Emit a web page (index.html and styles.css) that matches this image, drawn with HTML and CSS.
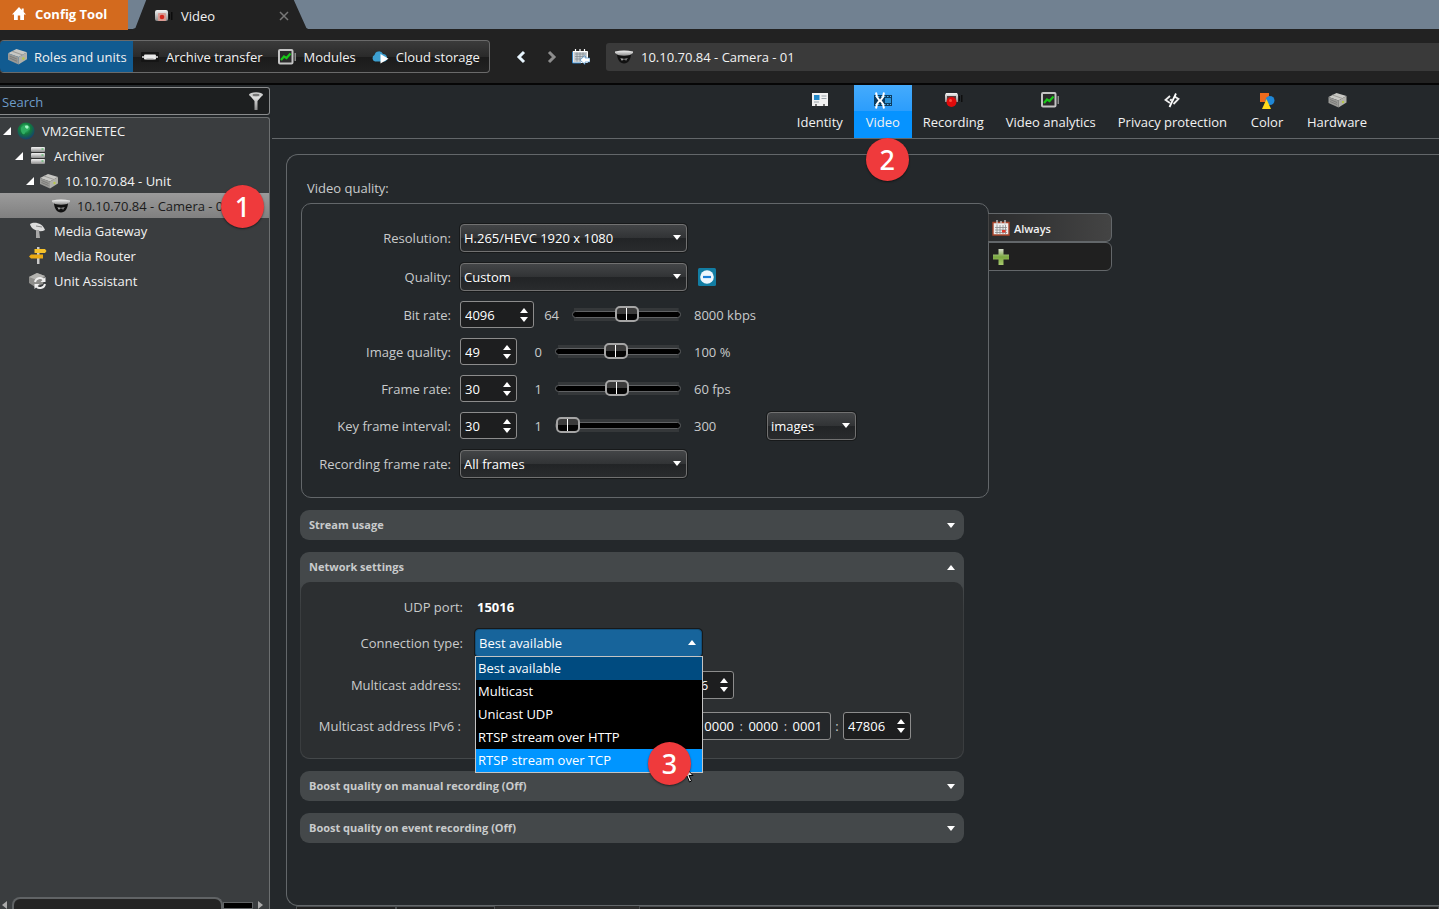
FILE: index.html
```html
<!DOCTYPE html>
<html lang="en">
<head>
<meta charset="utf-8">
<title>Config Tool - Video</title>
<meta name="viewport" content="width=device-width, initial-scale=1">
<link rel="stylesheet" href="styles.css">
</head>
<body>
<svg class="sprite" aria-hidden="true">
  <defs>
    <linearGradient id="g-steel" x1="0" y1="0" x2="0" y2="1"><stop offset="0" stop-color="#f4f4f4"/><stop offset="1" stop-color="#8c8c8c"/></linearGradient>
    <radialGradient id="g-globe" cx=".45" cy=".35" r=".65"><stop offset="0" stop-color="#3fd07a"/><stop offset=".5" stop-color="#137a3c"/><stop offset="1" stop-color="#163f6e"/></radialGradient>
    <linearGradient id="g-plus" x1="0" y1="0" x2="0" y2="1"><stop offset="0" stop-color="#d5dccb"/><stop offset=".5" stop-color="#7aa840"/><stop offset="1" stop-color="#a9c96f"/></linearGradient>
  </defs>
  <symbol id="i-home" viewBox="0 0 16 16"><path d="M8 1 1 8.400h2V14h3.800V9.500h2.400V14H13V8.400h2L12.700 6V2.500h-2V4z" fill="#fff"/></symbol>
  <symbol id="i-cube" viewBox="0 0 18 16"><path d="M0 5 8 1l10 3-8 4.500z" fill="#c8c8c4"/><path d="M0 5 10 8.500V15.500L0 11z" fill="#999996"/><path d="M10 8.500 18 4v6.500l-8 5z" fill="#b0b0aa"/><path d="M4 3 14 6.500" stroke="#9c9c98" fill="none"/><path d="m1.500 7.500 7 3M1.500 9.500l7 3" stroke="#7d7d7a" fill="none"/><circle cx="14.500" cy="10" r="1.200" fill="#b7c84a"/></symbol>
  <symbol id="i-cam" viewBox="0 0 18 14"><rect x="0" y="1" width="13" height="11" rx="2" fill="url(#g-steel)"/><rect x="3" y="4" width="8" height="8" rx="1" fill="#d99a92"/><circle cx="7" cy="8" r="2.300" fill="#d3281d"/><path d="M14 5h1v5h-1zM16 3h1.500v8H16z" fill="#0c0c0c"/></symbol>
  <symbol id="i-transfer" viewBox="0 0 18 12"><rect x="0" y="1" width="18" height="10" rx="1" fill="#151515"/><rect x="3" y="3.500" width="12" height="5" rx="1" fill="#e9e9e9"/><path d="M1 6h3M14 6h3" stroke="#ddd" stroke-width="1.500"/><path d="M5.500 8h7" stroke="#999"/></symbol>
  <symbol id="i-chart" viewBox="0 0 19 16"><rect x="1" y="1" width="13.500" height="13.500" rx="1" fill="#2b2b2b" stroke="#c4c4c4" stroke-width="2"/><path d="m3 11 3-3.500L8.500 9l4-4.500" stroke="#19c819" stroke-width="2.200" fill="none"/><path d="M16.500 4h1.500v8h-1.500z" fill="#8b8b8b"/></symbol>
  <symbol id="i-cloud" viewBox="0 0 18 14"><path d="M4 11.500A3.500 3.500 0 0 1 3.500 5 4.500 4.500 0 0 1 12 4a4 4 0 0 1 2 7.500z" fill="#3d9fd0"/><path d="M9.500 4v9.500l8-4.700z" fill="#fff"/></symbol>
  <symbol id="i-back" viewBox="0 0 10 14"><path d="M8 2 3 7l5 5" stroke="#e8f6ff" stroke-width="3" fill="none"/></symbol>
  <symbol id="i-forward" viewBox="0 0 10 14"><path d="m2 2 5 5-5 5" stroke="#8d8d8d" stroke-width="3" fill="none"/></symbol>
  <symbol id="i-goto" viewBox="0 0 18 16"><path d="M1 2.500h14.500v11H1z" fill="#c9ced2" stroke="#fff"/><path d="M3 5h11M3 7.500h11M3 10h11M5 3.500v9M8 3.500v9M11 3.500v9" stroke="#7d878f" stroke-width=".7"/><path d="M3.500 0v3M8 0v3M12.500 0v3" stroke="#fff" stroke-width="1.200"/><path d="M.5 3v11H9" stroke="#2f80c4" fill="none"/><path d="m8 11 5-4.500v2.500h5v4h-5V15.500z" fill="#fff" stroke="#2f80c4" stroke-width=".6"/></symbol>
  <symbol id="i-dome" viewBox="0 0 18 14"><path d="M2 3.500h14c0 6-3 10-7 10s-7-4-7-10z" fill="#111"/><path d="M0 1.500Q9-.5 18 1.500V3l-3 2Q9 6.500 3 5L0 3z" fill="url(#g-steel)"/><path d="M5.500 8.500c2 1 5 1 7 0" stroke="#777" fill="none"/><circle cx="7" cy="9.500" r="1" fill="#aaa"/><circle cx="11" cy="9.500" r="1" fill="#777"/></symbol>
  <symbol id="i-filter" viewBox="0 0 14 18"><path d="M0 2.500 5.500 9v9h3V9L14 2.500z" fill="url(#g-steel)"/><ellipse cx="7" cy="2.800" rx="6.800" ry="2.500" fill="#cfcfcf"/><ellipse cx="7" cy="3" rx="3.500" ry="1.200" fill="#777"/></symbol>
  <symbol id="i-globe" viewBox="0 0 18 18"><circle cx="9" cy="9" r="8.500" fill="url(#g-globe)"/><path d="M6 4c2-2 7-1 7 2s-4 2-5 5-4 0-4-3 .5-3 2-4z" fill="#2fae62"/><path d="M8 4c1.500-1 4-.5 3.500 1.500S8 7 8 4z" fill="#a4f5c4"/></symbol>
  <symbol id="i-server" viewBox="0 0 16 18"><g fill="url(#g-steel)"><rect x="1" y="0" width="14" height="5" rx="1"/><rect x="1" y="6" width="14" height="5" rx="1"/><rect x="1" y="12" width="14" height="5" rx="1"/></g><path d="M1 5.500h14M1 11.500h14" stroke="#333"/><path d="M11.500 2h2m-2 6h2m-2 6h2" stroke="#37b34a"/></symbol>
  <symbol id="i-dish" viewBox="0 0 18 18"><path d="M1 2C5-1 14 1 16 8c-5 3-14 0-15-6z" fill="#dcdcdc"/><path d="m7 4 6 1" stroke="#888"/><path d="M7 8h3l1 8H7z" fill="#a8a8a8"/></symbol>
  <symbol id="i-sign" viewBox="0 0 18 18"><path d="M8 0h2.500v17H8z" fill="#c9c9c9"/><path d="M5.500 2H16l1.500 2L16 6H5.500z" fill="#f6c22b"/><path d="M2 7.500h12v4H2L0 9.500z" fill="#eaa914"/></symbol>
  <symbol id="i-assist" viewBox="0 0 18 18"><path d="m0 5 8-4 8 3-2 8-8 3-6-4z" fill="#8d8d8a"/><path d="m0 5 8-4 8 3-8 4z" fill="#b3b3b0"/><path d="M6 10a5 5 0 0 1 8.500-2.500M16 12a5 5 0 0 1-8.500 2.500" stroke="#efefef" stroke-width="2" fill="none"/><path d="M16.500 5v5h-5zM5.500 17v-5h5z" fill="#efefef"/></symbol>
  <symbol id="i-identity" viewBox="0 0 18 16"><path d="M1 1h16v13h-3l-1-1-1 1H6l-1-1-1 1H1z" fill="#f1f1f1"/><path d="M3 3h5.500v5H3z" fill="#2388c8"/><path d="M10.500 4h5M10.500 6.500h5M3 10h5" stroke="#9aa4aa"/><path d="M4 12h2v2H4zM12 12h2v2h-2z" fill="#777"/></symbol>
  <symbol id="i-video" viewBox="0 0 20 17"><path d="M1 3h18v11H1z" fill="#0d3c60"/><path d="M2 4.500h16M2 12.500h16" stroke="#52b6f2" stroke-dasharray="1.500 1.500"/><path d="M12 6h6v5h-6z" fill="#2b93d8"/><path d="M3 .5 4 5l2.500 3.500L4 12l-1 4.500M11 .5 10 5 7.500 8.500 10 12l1 4.500M6 8.500h2" stroke="#fff" stroke-width="2" fill="none"/></symbol>
  <symbol id="i-record" viewBox="0 0 19 16"><path d="M2 1h11l1 2v7H1V3z" fill="url(#g-steel)"/><path d="M3 4h9v5H3z" fill="#5a3a3a"/><path d="M15 4h1v5h-1zM17 3h1.500v7H17z" fill="#0e0e0e"/><circle cx="7.500" cy="10" r="5" fill="#e00b0b"/><circle cx="6.500" cy="8.500" r="1.500" fill="#ff4a3c"/></symbol>
  <symbol id="i-privacy" viewBox="0 0 16 16"><path d="M6 4 1.500 8 6 11M10.500 4.500 14.500 7l-5 5" stroke="#eee" stroke-width="1.800" fill="none"/><path d="M12 1.500 5.500 15" stroke="#fff" stroke-width="1.800"/><circle cx="7" cy="8" r="1.300" fill="#ddd"/></symbol>
  <symbol id="i-color" viewBox="0 0 16 18"><path d="M1 1h9v9H1z" fill="#ee6a1c"/><circle cx="11" cy="8.500" r="4.500" fill="#1f87d6"/><path d="m7.500 7 4.500 10H3z" fill="#ffd91c"/></symbol>
  <symbol id="i-calendar" viewBox="0 0 18 16"><path d="M1 2.500h16V15H1z" fill="#eee" stroke="#a9452b" stroke-width="1.400"/><path d="M3 7.500h12M3 10h12M3 12.500h12M5 5v9M8 5v9M11 5v9M13.500 5v9" stroke="#888" stroke-width=".8"/><path d="M5 0v5M9 1v3M13 0v5" stroke="#ccc" stroke-width="1.300"/><path d="M10 10h3.500v2.500H10z" fill="#e33b2e"/></symbol>
  <symbol id="i-plus" viewBox="0 0 16 16"><path d="M5.500 0h5v5.500H16v5h-5.500V16h-5v-5.500H0v-5h5.500z" fill="url(#g-plus)"/></symbol>
  <symbol id="i-minus" viewBox="0 0 18 18"><rect width="18" height="18" rx="1.500" fill="#127da3"/><circle cx="9" cy="9" r="6.800" fill="#eef6fd"/><path d="M5 9h8" stroke="#1b7ed6" stroke-width="2.200"/></symbol>
  <symbol id="i-up" viewBox="0 0 8 5"><path d="M4 0 8 5H0z" fill="#fff"/></symbol>
  <symbol id="i-down" viewBox="0 0 8 5"><path d="M0 0h8L4 5z" fill="#fff"/></symbol>
  <symbol id="i-close" viewBox="0 0 10 10"><path d="m1 1 8 8M9 1 1 9" stroke="#777" stroke-width="1.500"/></symbol>
  <symbol id="i-expand" viewBox="0 0 8 8"><path d="M8 0v8H0z" fill="#fff"/></symbol>
  <symbol id="i-cursor" viewBox="0 0 12 18"><path d="M1 1v13l3-3 2.500 6 2-1-2.500-5.500h4z" fill="#fff" stroke="#000"/></symbol>
</svg>

<header class="titlebar">
  <button class="app-tab" type="button"><svg width="16" height="16"><use href="#i-home"/></svg>Config Tool</button>
  <div class="task-tab">
    <svg width="18" height="14"><use href="#i-cam"/></svg><span class="task-name">Video</span>
    <button class="plain" type="button" aria-label="Close tab"><svg width="10" height="10"><use href="#i-close"/></svg></button>
  </div>
</header>

<div class="toolbar">
  <nav class="views" aria-label="Views">
    <button class="view current" type="button"><svg width="19" height="17"><use href="#i-cube"/></svg>Roles and units</button>
    <button class="view" type="button"><svg width="18" height="12"><use href="#i-transfer"/></svg>Archive transfer</button>
    <button class="view" type="button"><svg width="19" height="16"><use href="#i-chart"/></svg>Modules</button>
    <button class="view" type="button"><svg width="18" height="14"><use href="#i-cloud"/></svg>Cloud storage</button>
  </nav>
  <div class="history">
    <button class="plain" type="button" aria-label="Back"><svg width="10" height="14"><use href="#i-back"/></svg></button>
    <button class="plain" type="button" aria-label="Forward"><svg width="10" height="14"><use href="#i-forward"/></svg></button>
    <button class="plain" type="button" aria-label="Go to"><svg width="18" height="16"><use href="#i-goto"/></svg></button>
  </div>
  <div class="path"><svg width="18" height="14"><use href="#i-dome"/></svg>10.10.70.84 - Camera - 01</div>
</div>

<div class="workspace">
  <aside class="sidebar">
    <div class="search">
      <input type="text" placeholder="Search" aria-label="Search">
      <button class="plain" type="button" aria-label="Filter"><svg width="14" height="18"><use href="#i-filter"/></svg></button>
    </div>
    <div class="tree-box">
      <ul class="tree">
        <li class="node level-0"><svg class="twist" width="8" height="8"><use href="#i-expand"/></svg><svg class="kind" width="18" height="18"><use href="#i-globe"/></svg>VM2GENETEC</li>
        <li class="node level-1"><svg class="twist" width="8" height="8"><use href="#i-expand"/></svg><svg class="kind" width="18" height="18"><use href="#i-server"/></svg>Archiver</li>
        <li class="node level-2"><svg class="twist" width="8" height="8"><use href="#i-expand"/></svg><svg class="kind" width="18" height="16"><use href="#i-cube"/></svg>10.10.70.84 - Unit</li>
        <li class="node level-3 selected"><span class="twist"></span><svg class="kind" width="18" height="14"><use href="#i-dome"/></svg>10.10.70.84 - Camera - 01<span class="step step-1">1</span></li>
        <li class="node level-1"><span class="twist"></span><svg class="kind" width="18" height="18"><use href="#i-dish"/></svg>Media Gateway</li>
        <li class="node level-1"><span class="twist"></span><svg class="kind" width="18" height="18"><use href="#i-sign"/></svg>Media Router</li>
        <li class="node level-1"><span class="twist"></span><svg class="kind" width="18" height="18"><use href="#i-assist"/></svg>Unit Assistant</li>
      </ul>
      <div class="hscroll"><span class="arrow-left"></span><span class="thumb"></span><span class="track"></span><span class="arrow-right"></span></div>
    </div>
  </aside>

  <main class="content">
    <nav class="pages" aria-label="Pages">
      <button class="page" type="button"><svg width="18" height="16"><use href="#i-identity"/></svg>Identity</button>
      <button class="page current" type="button"><svg width="20" height="17"><use href="#i-video"/></svg>Video<span class="step step-2">2</span></button>
      <button class="page" type="button"><svg width="19" height="16"><use href="#i-record"/></svg>Recording</button>
      <button class="page" type="button"><svg width="19" height="16"><use href="#i-chart"/></svg>Video analytics</button>
      <button class="page" type="button"><svg width="16" height="16"><use href="#i-privacy"/></svg>Privacy protection</button>
      <button class="page" type="button"><svg width="16" height="18"><use href="#i-color"/></svg>Color</button>
      <button class="page" type="button"><svg width="19" height="16"><use href="#i-cube"/></svg>Hardware</button>
    </nav>

    <section class="panel">
      <h2 class="heading">Video quality:</h2>
      <div class="quality">
        <form class="quality-form">
          <div class="row tall"><label for="resolution">Resolution:</label>
            <span class="combo"><select id="resolution"><option>H.265/HEVC 1920 x 1080</option></select><svg width="8" height="5"><use href="#i-down"/></svg></span></div>
          <div class="row tall"><label for="quality">Quality:</label>
            <span class="combo"><select id="quality"><option>Custom</option></select><svg width="8" height="5"><use href="#i-down"/></svg></span>
            <button class="plain" type="button" aria-label="Remove preset"><svg width="18" height="18"><use href="#i-minus"/></svg></button></div>
          <div class="row"><label for="bitrate">Bit rate:</label>
            <div class="scale"><span class="spin wide"><input id="bitrate" type="text" value="4096"><svg width="8" height="5"><use href="#i-up"/></svg><svg width="8" height="5"><use href="#i-down"/></svg></span><span class="min">64</span><input class="range" type="range" min="64" max="8000" value="4096" aria-label="Bit rate slider"></div><span class="max">8000 kbps</span></div>
          <div class="row"><label for="image-quality">Image quality:</label>
            <div class="scale"><span class="spin"><input id="image-quality" type="text" value="49"><svg width="8" height="5"><use href="#i-up"/></svg><svg width="8" height="5"><use href="#i-down"/></svg></span><span class="min">0</span><input class="range" type="range" min="0" max="100" value="48" aria-label="Image quality slider"></div><span class="max">100 %</span></div>
          <div class="row"><label for="frame-rate">Frame rate:</label>
            <div class="scale"><span class="spin"><input id="frame-rate" type="text" value="30"><svg width="8" height="5"><use href="#i-up"/></svg><svg width="8" height="5"><use href="#i-down"/></svg></span><span class="min">1</span><input class="range" type="range" min="1" max="60" value="30" aria-label="Frame rate slider"></div><span class="max">60 fps</span></div>
          <div class="row"><label for="key-frame">Key frame interval:</label>
            <div class="scale"><span class="spin"><input id="key-frame" type="text" value="30"><svg width="8" height="5"><use href="#i-up"/></svg><svg width="8" height="5"><use href="#i-down"/></svg></span><span class="min">1</span><input class="range" type="range" min="1" max="300" value="1" aria-label="Key frame interval slider"></div><span class="max">300</span>
            <span class="combo small"><select aria-label="Interval unit"><option>images</option></select><svg width="8" height="5"><use href="#i-down"/></svg></span></div>
          <div class="row tall"><label for="recording-rate">Recording frame rate:</label>
            <span class="combo"><select id="recording-rate"><option>All frames</option></select><svg width="8" height="5"><use href="#i-down"/></svg></span></div>
        </form>
        <div class="schedules">
          <button class="schedule current" type="button"><svg width="18" height="16"><use href="#i-calendar"/></svg><span>Always</span></button>
          <button class="schedule" type="button" aria-label="Add schedule"><svg width="18" height="16"><use href="#i-plus"/></svg></button>
        </div>
      </div>

      <div class="groups">
        <section class="group"><button class="group-head" type="button">Stream usage<svg width="8" height="5"><use href="#i-down"/></svg></button></section>
        <section class="group open">
          <button class="group-head" type="button">Network settings<svg width="8" height="5"><use href="#i-up"/></svg></button>
          <div class="group-body">
            <div class="net-row"><span class="label">UDP port:</span><b class="port">15016</b></div>
            <div class="net-row"><label for="connection">Connection type:</label>
              <div class="connection">
                <span class="combo active"><select id="connection"><option>Best available</option></select><svg width="8" height="5"><use href="#i-up"/></svg></span>
                <ul class="menu" role="listbox" aria-label="Connection type">
                  <li class="chosen" role="option" aria-selected="true">Best available</li>
                  <li role="option">Multicast</li>
                  <li role="option">Unicast UDP</li>
                  <li role="option">RTSP stream over HTTP</li>
                  <li class="hover" role="option">RTSP stream over TCP</li>
                </ul>
                <svg class="cursor" width="12" height="18"><use href="#i-cursor"/></svg>
                <span class="step step-3">3</span>
              </div></div>
            <div class="net-row address-row"><label for="multicast">Multicast address:</label>
              <div class="address"><span class="box ipv4"><input id="multicast" type="text"></span><span class="sep"></span><span class="spin port-spin"><input type="text" value="47806" aria-label="Multicast port"><svg width="8" height="5"><use href="#i-up"/></svg><svg width="8" height="5"><use href="#i-down"/></svg></span></div></div>
            <div class="net-row address-row"><label for="ipv6">Multicast address IPv6 :</label>
              <div class="address"><span class="box ipv6"><input id="ipv6" type="text"><i></i><input type="text" aria-label="Group 2"><i></i><input type="text" aria-label="Group 3"><i></i><input type="text" aria-label="Group 4"><i></i><input type="text" aria-label="Group 5"><i></i><input type="text" value="0000" aria-label="Group 6"><i>:</i><input type="text" value="0000" aria-label="Group 7"><i>:</i><input type="text" value="0001" aria-label="Group 8"></span><span class="sep">:</span><span class="spin port-spin"><input type="text" value="47806" aria-label="IPv6 multicast port"><svg width="8" height="5"><use href="#i-up"/></svg><svg width="8" height="5"><use href="#i-down"/></svg></span></div></div>
          </div>
        </section>
        <section class="group"><button class="group-head" type="button">Boost quality on manual recording (Off)<svg width="8" height="5"><use href="#i-down"/></svg></button></section>
        <section class="group"><button class="group-head" type="button">Boost quality on event recording (Off)<svg width="8" height="5"><use href="#i-down"/></svg></button></section>
      </div>
    </section>
    <footer class="actions"><span class="action-a"></span><span class="action-b"></span><span class="action-c"></span><span class="action-d"></span></footer>
  </main>
</div>
</body>
</html>
```

FILE: styles.css
```css
:root {
  --bg: #24282b;
  --line: #63676a;
  --text: #c9cbcc;
}

* { box-sizing: border-box; }

body {
  margin: 0;
  height: 100vh;
  overflow: hidden;
  display: flex;
  flex-direction: column;
  background: var(--bg);
  color: #f2f2f2;
  font: 13px/18px "Open Sans", "Noto Sans", sans-serif;
}

button, input, select { font: inherit; color: inherit; }
button { cursor: pointer; }
svg { flex: none; }
ul { list-style: none; margin: 0; padding: 0; }

.sprite { position: absolute; width: 0; height: 0; }

.plain {
  display: flex;
  padding: 0;
  border: 0;
  background: none;
}

/* Title bar */
.titlebar {
  display: flex;
  height: 30px;
  flex: none;
  background: #718191;
  border-bottom: 1px solid #222;
}

.app-tab {
  display: flex;
  align-items: center;
  gap: 8px;
  width: 128px;
  height: 30px;
  padding: 0 0 2px 11px;
  border: 0;
  background: #d36a1e;
  color: #fff;
  font-weight: 700;
  white-space: nowrap;
}

.task-tab {
  display: flex;
  align-items: center;
  gap: 8px;
  width: 180px;
  height: 30px;
  margin-left: 2px;
  padding: 2px 21px 0 25px;
  background: #222;
  clip-path: polygon(0 100%, 3% 93%, 9% 0, 91% 0, 98% 93%, 100% 100%);
}

.task-name { flex: 1; }

/* Toolbar */
.toolbar {
  display: flex;
  align-items: center;
  flex: none;
  height: 55px;
  background: #222;
  border-bottom: 2px solid #060606;
}

.views {
  display: flex;
  width: 490px;
  height: 33px;
  border: 1px solid #6a6a6a;
  border-left: 0;
  border-radius: 4px;
  background: linear-gradient(#3b3b3b, #2a2a2a 50%, #1b1b1b 52%, #222);
}

.view {
  display: flex;
  align-items: center;
  gap: 7px;
  padding: 0 0 0 8px;
  margin-right: 7px;
  border: 0;
  background: none;
  white-space: nowrap;
}

.view.current {
  width: 133px;
  margin-right: 0;
  background: #115b91;
  border-radius: 4px 0 0 4px;
}

.history {
  display: flex;
  align-items: center;
  gap: 21px;
  margin: 0 16px 0 26px;
}

.history .plain:last-child { margin-left: -6px; }

.path {
  display: flex;
  align-items: center;
  gap: 8px;
  flex: 1;
  height: 28px;
  padding-left: 9px;
  background: #3a3a3a;
  border-radius: 3px 0 0 3px;
}

/* Workspace */
.workspace { display: flex; flex: 1; min-height: 0; }

.sidebar {
  display: flex;
  flex-direction: column;
  gap: 2px;
  flex: none;
  width: 270px;
  padding-top: 2px;
}

.search {
  display: flex;
  align-items: center;
  height: 28px;
  padding-right: 6px;
  border: 1px solid #8a8c8d;
  border-left: 0;
  border-radius: 0 3px 3px 0;
  background: #1d1f20;
}

.search input {
  flex: 1;
  min-width: 0;
  padding: 1px 2px 0;
  border: 0;
  background: none;
}

.search input::placeholder { color: #6d9cc9; opacity: 1; }

.tree-box {
  display: flex;
  flex-direction: column;
  justify-content: space-between;
  flex: 1;
  border: 1px solid #6c6f70;
  border-width: 1px 1px 0 0;
  border-radius: 0 3px 0 0;
  background: #3a3d3f;
}

.node {
  display: flex;
  align-items: center;
  height: 25px;
  position: relative;
  white-space: nowrap;
}

.twist { width: 8px; margin-right: 6px; }
.kind { margin-right: 7px; }
.level-0 { padding-left: 3px; }
.level-1 { padding-left: 15px; }
.level-2 { padding-left: 26px; }
.level-3 { padding-left: 38px; }

.selected {
  background: linear-gradient(#9b9b9b, #808080);
  color: #1b1b1b;
}

.hscroll { display: flex; align-items: flex-end; height: 12px; padding-left: 2px; }

.thumb {
  width: 211px;
  height: 12px;
  margin-left: 5px;
  border: 2px solid #606365;
  border-bottom: 0;
  border-radius: 8px 8px 0 0;
  background: #242424;
}

.track { width: 30px; height: 7px; margin-right: 5px; border: 1px solid #606365; background: #000; }
.arrow-left, .arrow-right { border: 4px solid transparent; }
.arrow-left { border-right: 5px solid #aaa; border-left: 0; }
.arrow-right { border-left: 5px solid #aaa; border-right: 0; }

.content {
  display: flex;
  flex-direction: column;
  flex: 1;
  min-width: 0;
  padding-left: 2px;
}

.pages {
  display: flex;
  justify-content: flex-end;
  flex: none;
  height: 54px;
  padding-right: 61px;
  border-bottom: 1px solid var(--line);
}

.page {
  display: flex;
  flex-direction: column;
  justify-content: space-between;
  align-items: center;
  min-width: 58px;
  height: 53px;
  position: relative;
  padding: 7px 11px;
  border: 0;
  background: none;
  white-space: nowrap;
}

.page.current { background: linear-gradient(#45abfc, #2b9dfc 50%, #0693ff 50%); }

.panel {
  flex: 1;
  min-height: 0;
  margin: 15px 0 0 14px;
  padding: 24px 0 0 14px;
  border: 1px solid var(--line);
  border-right: 0;
  border-radius: 12px 0 0 12px;
}

.heading {
  margin: 0 0 6px 6px;
  color: var(--text);
  font-size: 13px;
  font-weight: 400;
}

.quality { display: flex; align-items: flex-start; }

.quality-form {
  width: 688px;
  padding: 14px 0;
  border: 1px solid var(--line);
  border-radius: 10px;
}

.row { display: flex; align-items: center; height: 37px; color: var(--text); }
.row.tall { height: 39px; }
.row > label { width: 149px; margin-right: 9px; text-align: right; white-space: nowrap; }
.row > .plain { margin-left: 11px; }

.combo {
  display: flex;
  align-items: center;
  width: 227px;
  height: 28px;
  padding-right: 5px;
  border: 1px solid #717171;
  border-radius: 4px;
  background: linear-gradient(#434547, #313335 50%, #222426 52%, #292b2d);
  box-shadow: 0 0 0 1px #17191a;
  color: #fff;
}

.combo.small { width: 89px; }

.combo select {
  flex: 1;
  min-width: 0;
  padding: 0 3px;
  border: 0;
  background: none;
  appearance: none;
  outline: 0;
}

.combo.active { border-color: #13517d; background: #17649b; }

.scale { display: flex; align-items: center; width: 221px; }

.spin {
  display: grid;
  grid-template-columns: 1fr 8px;
  grid-template-rows: 1fr 1fr;
  row-gap: 4px;
  width: 57px;
  height: 27px;
  padding: 0 5px 0 0;
  border: 1px solid #8c8c8c;
  border-radius: 3px;
  background: #1d1e1f;
  color: #fff;
}

.spin.wide { width: 74px; }
.spin svg:nth-of-type(1) { align-self: end; }
.spin svg { grid-column: 2; }

.spin input, .box input {
  grid-row: 1 / 3;
  min-width: 0;
  width: 100%;
  padding: 0 0 0 4px;
  border: 0;
  background: none;
}

.min { width: 15px; margin: 0 13px 0 10px; text-align: right; white-space: nowrap; }
.max { width: 73px; margin-left: 13px; white-space: nowrap; }

.range {
  flex: 1;
  min-width: 0;
  height: 18px;
  margin: 0;
  appearance: none;
  background: linear-gradient(#35383a, #35383a) center / 96% 13px no-repeat;
}

.range::-webkit-slider-runnable-track {
  height: 7px;
  border: 1px solid #606264;
  border-radius: 4px;
  background: #000;
}

.range::-webkit-slider-thumb {
  appearance: none;
  width: 24px;
  height: 16px;
  margin-top: -6px;
  border: 2px solid #a5a5a5;
  border-radius: 5px;
  background: linear-gradient(90deg, transparent 9px, #fff 9px, #fff 10px, transparent 10px), linear-gradient(#3b3b3b 50%, #050505 50%);
}

.schedules { width: 124px; margin: 10px 0 0 -1px; }

.schedule {
  display: flex;
  align-items: center;
  gap: 4px;
  width: 100%;
  height: 29px;
  padding: 0 0 0 3px;
  border: 1px solid var(--line);
  border-radius: 0 6px 6px 0;
  background: #202020;
  font-size: 11px;
  font-weight: 600;
}

.schedule span { padding-top: 3px; }

.schedule.current {
  border-left-color: transparent;
  background: linear-gradient(90deg, #2b2c2d, #444);
}

/* Collapsible groups */
.groups {
  display: flex;
  flex-direction: column;
  gap: 12px;
  width: 664px;
  margin: 12px 0 0 -1px;
}

.group { border-radius: 9px; background: #44484a; }

.group-head {
  display: flex;
  align-items: center;
  justify-content: space-between;
  width: 100%;
  height: 30px;
  padding: 0 9px;
  border: 0;
  background: none;
  color: var(--text);
  font-size: 11px;
  font-weight: 700;
}

.group.open { background: linear-gradient(#44484a 30px, #3a3d3f 60px); }

.group-body {
  display: grid;
  grid-template-rows: 36px 35px 50px 32px;
  margin: 0 1px;
  padding: 7px 0 16px;
  border-bottom: 1px solid #44484a;
  border-radius: 9px;
  background: #2c2f31;
}

.net-row { display: flex; align-items: center; color: var(--text); }
.net-row > label, .net-row > .label { width: 162px; margin-right: 12px; text-align: right; white-space: nowrap; }
.address-row > label { width: 160px; margin-right: 14px; }
.port { padding-left: 2px; color: #fff; }

.connection { position: relative; }

.menu {
  position: absolute;
  top: 27px;
  left: 0;
  z-index: 2;
  width: 228px;
  border: 1px solid #c4c4c4;
  background: #000;
  color: #fff;
}

.menu li { height: 23px; padding: 2px; }
.menu .chosen { background: #004b80; }
.menu .hover { background: #0095ff; }

.cursor { position: absolute; top: 136px; left: 208px; z-index: 3; }

.address { display: flex; align-items: center; }

.box {
  display: flex;
  align-items: center;
  height: 28px;
  border: 1px solid #8c8c8c;
  border-radius: 3px;
  background: #24272a;
  color: #fff;
}

.ipv4 { width: 179px; }
.ipv6 { width: 356px; padding: 0 3px; }
.ipv6 input { flex: 1; padding: 0; text-align: center; }
.ipv6 i { width: 5px; color: var(--text); font-style: normal; text-align: center; }
.sep { width: 12px; text-align: center; }
.port-spin { width: 68px; height: 28px; }

/* Numbered callouts */
.step {
  position: absolute;
  z-index: 4;
  width: 43px;
  height: 43px;
  border-radius: 50%;
  background: #ef3a3c;
  box-shadow: 0 1px 2px rgba(0, 0, 0, .5);
  color: #fff;
  font: 500 27px/43px "Noto Sans", sans-serif;
  text-align: center;
}

.step-1 { top: -8px; right: 5px; }
.step-2 { top: 53px; left: 12px; }
.step-3 { top: 113px; left: 173px; }

/* Upper edge of the action bar */
.actions { display: flex; flex: none; height: 3px; padding-left: 24px; }
.actions span { border: 1px solid #4c4f51; border-width: 1px 1px 0; background: #202020; }
.action-a { width: 100px; }
.action-b { width: 99px; }
.actions .action-c { width: 144px; border-color: transparent; background: #2d2d2d; }
.action-d { flex: 1; }
```
